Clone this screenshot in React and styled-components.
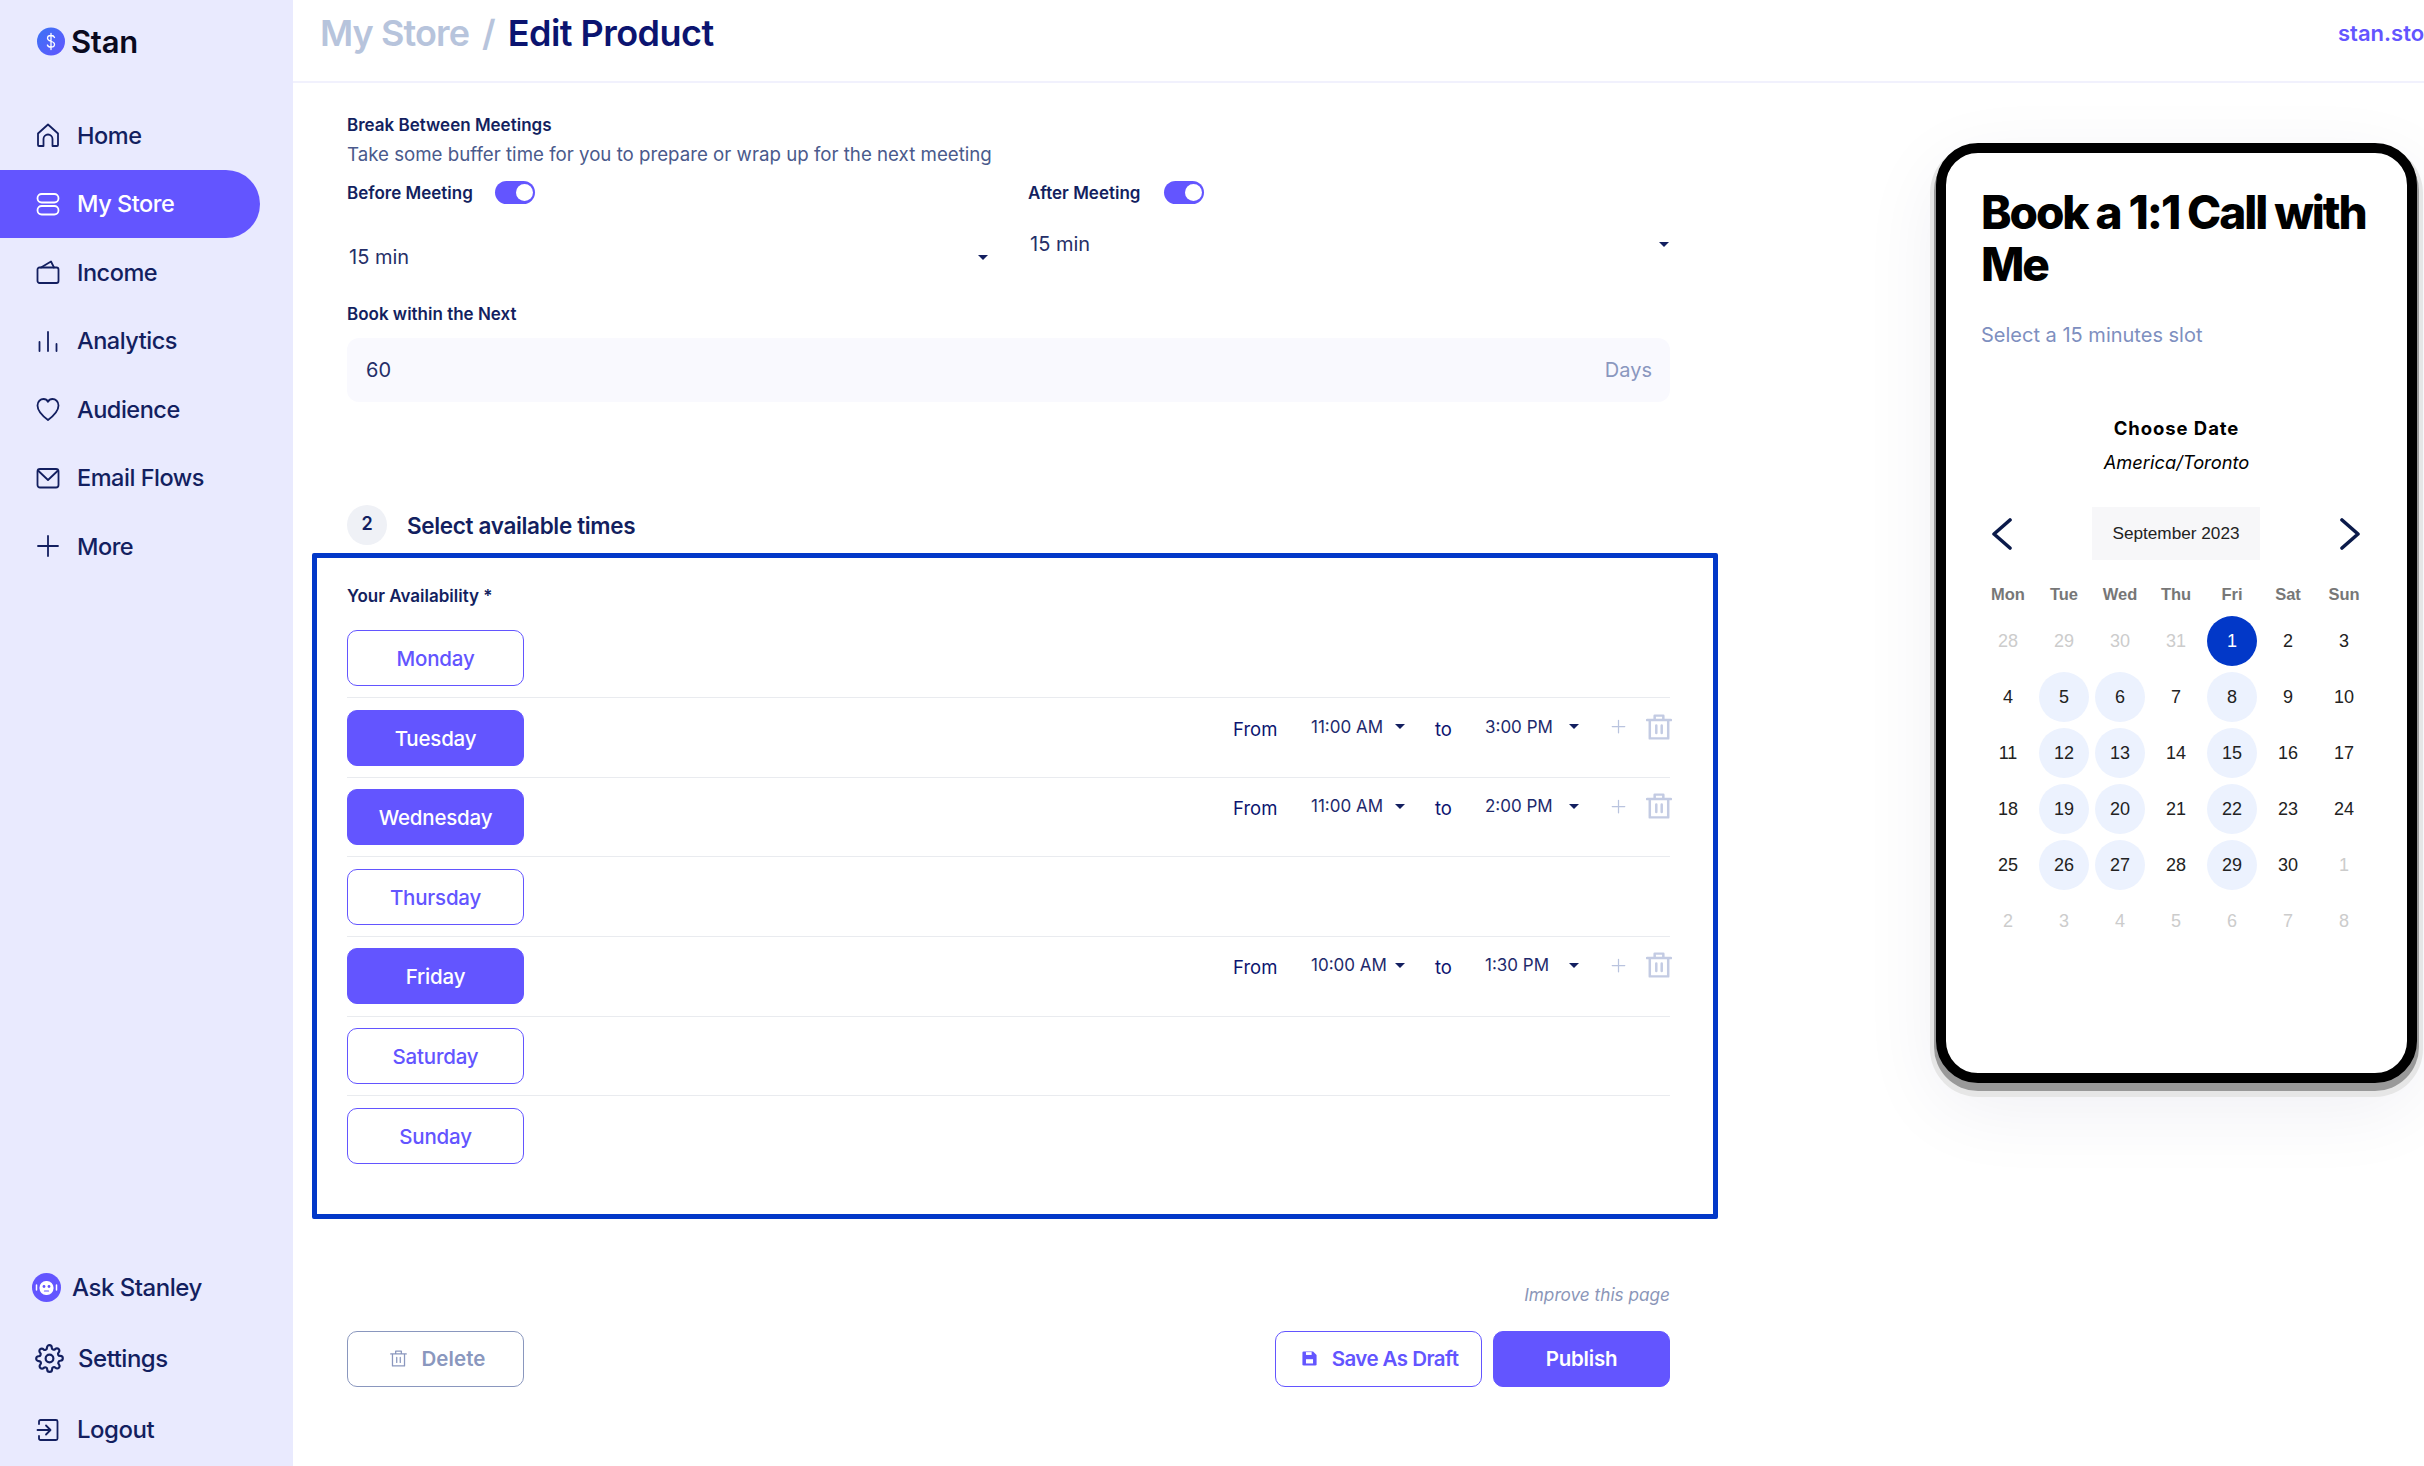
import styled, { createGlobalStyle } from 'styled-components'

const GlobalStyle = createGlobalStyle`
  * { box-sizing: border-box; }
  html, body { margin: 0; padding: 0; background: #fff; overflow: hidden; }
  body { font-family: Inter, "Noto Sans", sans-serif; color: #131f60; }
`

const purple = '#6355ff'
const navy = '#131f60'

const Page = styled.div`
  display: flex;
  width: 2424px;
  height: 1466px;
  overflow: hidden;
`

const Sidebar = styled.aside`
  flex: 0 0 293px;
  display: flex;
  flex-direction: column;
  justify-content: space-between;
  background: #e9eafe;
  padding-bottom: 1px;
`

const Logo = styled.div`
  display: flex;
  align-items: center;
  gap: 6px;
  height: 82px;
  margin-bottom: 19px;
  padding-left: 37px;
  font-size: 31px;
  font-weight: 600;
  letter-spacing: -0.01em;
  color: #0a0a1e;
`

const NavItem = styled.div`
  display: flex;
  align-items: center;
  gap: 17px;
  width: 260px;
  height: 68.5px;
  padding-left: 36px;
  font-size: 23.5px;
  font-weight: 500;
  letter-spacing: -0.02em;
  border-radius: 0 35px 35px 0;
  color: ${p => (p.$active ? '#fff' : navy)};
  background: ${p => (p.$active ? purple : 'transparent')};
`

const BottomItem = styled(NavItem)`
  height: 71px;
  padding-left: ${p => p.$left || 36}px;
  gap: ${p => p.$gap || 17}px;
  font-size: 24px;
`

const Main = styled.main`
  flex: 1;
  min-width: 0;
  display: flex;
  flex-direction: column;
`

const Header = styled.header`
  flex: 0 0 83px;
  display: flex;
  align-items: flex-start;
  padding: 12px 0 0 27px;
  border-bottom: 2px solid #f1f1fd;
  overflow: hidden;
`

const Crumbs = styled.div`
  flex: 0 0 2018px;
  display: flex;
  gap: 13px;
  font-size: 36px;
  line-height: 42px;
  font-weight: 600;
  letter-spacing: -0.025em;
`

const Crumb = styled.span`
  color: ${p => (p.$current ? '#0b1470' : '#b7c4dc')};
  letter-spacing: ${p => (p.$current ? '-0.015em' : 'inherit')};
`

const Domain = styled.span`
  flex: none;
  margin-top: 9px;
  font-size: 22px;
  line-height: 24px;
  font-weight: 600;
  color: ${purple};
  white-space: nowrap;
`

const Body = styled.div`
  flex: 1;
  display: flex;
`

const Form = styled.section`
  flex: 0 0 1323px;
  margin-left: 54px;
  padding-top: 30px;
`

const Label = styled.div`
  font-size: 17px;
  line-height: 24px;
  font-weight: 600;
  color: ${navy};
`

const Hint = styled.div`
  margin-top: 5px;
  font-size: 18.7px;
  line-height: 26px;
  color: #4a5a8c;
`

const TwoCols = styled.div`
  display: grid;
  grid-template-columns: 681px 642px;
  margin-top: 13px;
`

const ToggleRow = styled.div`
  display: flex;
  align-items: center;
  gap: ${p => p.$gap}px;
  height: 23px;
`

const Toggle = styled.div`
  display: flex;
  align-items: center;
  justify-content: flex-end;
  width: 40px;
  height: 23px;
  padding-right: 2px;
  border-radius: 12px;
  background: ${purple};

  &::after {
    content: '';
    width: 17px;
    height: 17px;
    border-radius: 50%;
    background: #fff;
  }
`

const Select = styled.div`
  display: flex;
  align-items: center;
  justify-content: space-between;
  height: 40px;
  margin-top: ${p => p.$top}px;
  padding-left: 2px;
  padding-right: ${p => p.$right}px;
  font-size: 20px;
  color: #252f68;
`

const Caret = styled.span`
  flex: none;
  width: 0;
  height: 0;
  border-left: ${p => p.$size}px solid transparent;
  border-right: ${p => p.$size}px solid transparent;
  border-top: ${p => p.$size}px solid #131f60;
`

const BookLabel = styled(Label)`
  margin-top: 25px;
`

const NumberInput = styled.div`
  display: flex;
  align-items: center;
  justify-content: space-between;
  height: 64px;
  margin-top: 12px;
  padding: 0 18px 0 19px;
  border-radius: 12px;
  background: #f9f9fe;
  font-size: 20px;
  color: #252f68;
`

const Unit = styled.span`
  color: #8a97be;
`

const StepRow = styled.div`
  display: flex;
  align-items: center;
  gap: 20px;
  margin-top: 103px;
`

const StepBadge = styled.div`
  display: flex;
  align-items: center;
  justify-content: center;
  width: 40px;
  height: 40px;
  padding-bottom: 4px;
  border-radius: 50%;
  background: #eff1f6;
  font-size: 18px;
  font-weight: 600;
`

const StepTitle = styled.div`
  font-size: 22.5px;
  font-weight: 600;
  letter-spacing: -0.015em;
  color: ${navy};
`

const AvailabilityBox = styled.div`
  margin: 8px -48px 0 -35px;
  padding: 26px 43px 38px 30px;
  border: 5.5px solid #0238c8;
  border-radius: 2px;
`

const DayList = styled.div`
  margin-top: 10.7px;
`

const DayRow = styled.div`
  display: flex;
  align-items: center;
  padding: 11.3px 0;
  border-bottom: 1px solid ${p => (p.$last ? 'transparent' : '#e9ebef')};
`

const DayButton = styled.div`
  flex: none;
  display: flex;
  align-items: center;
  justify-content: center;
  width: 177px;
  height: 56px;
  padding-top: 1px;
  border-radius: 10px;
  border: 1.5px solid ${purple};
  background: ${p => (p.$on ? purple : '#fff')};
  color: ${p => (p.$on ? '#fff' : purple)};
  font-size: 20.5px;
  font-weight: 500;
  letter-spacing: -0.01em;
`

const TimeGroup = styled.div`
  display: flex;
  align-items: center;
  margin-left: auto;
  margin-right: -2px;
  margin-bottom: 18px;
  color: #0b1470;
  font-size: 18.5px;
`

const FixedText = styled.span`
  width: ${p => p.$w}px;
`

const TimeSelect = styled.div`
  display: flex;
  align-items: center;
  justify-content: space-between;
  width: 124px;
  margin-bottom: 4px;
  padding-right: 30px;
  font-size: 17px;
  color: #1e2a6c;
`

const PlusSlot = styled.div`
  display: flex;
  width: 37px;
  margin-bottom: 4px;
  padding-left: 2px;
  color: #b9c3de;
`

const TrashSlot = styled.div`
  display: flex;
  margin-bottom: 4px;
  color: #c3cbe3;
`

const Improve = styled.div`
  margin-top: 64px;
  font-size: 17.2px;
  line-height: 24px;
  font-style: italic;
  text-align: right;
  color: #8b96b8;
`

const Actions = styled.div`
  display: flex;
  gap: 11px;
  margin-top: 24px;
`

const ActionButton = styled.div`
  display: flex;
  align-items: center;
  justify-content: center;
  gap: ${p => p.$gap || 0}px;
  width: ${p => p.$w}px;
  height: 56px;
  padding-left: ${p => p.$pad || 0}px;
  margin-right: ${p => (p.$push ? 'auto' : 0)};
  border-radius: 10px;
  border: 1.5px solid ${p => p.$line};
  background: ${p => p.$fill || '#fff'};
  color: ${p => p.$ink};
  font-size: 20.5px;
  font-weight: 600;
  letter-spacing: ${p => p.$track || '-0.01em'};
`

const PhoneWrap = styled.div`
  margin-left: 266px;
  padding-top: 60px;
`

const Phone = styled.div`
  width: 481px;
  height: 940px;
  padding: 33px 35px 0;
  border: 10px solid #000;
  border-radius: 42px;
  background: #fff;
  box-shadow:
    0 6px 0 2px #999,
    0 8px 0 6px #e6e6e6,
    0 24px 80px rgba(20, 20, 80, 0.07);
`

const PhoneTitle = styled.h1`
  margin: 0;
  font-size: 46px;
  line-height: 52px;
  font-weight: 800;
  letter-spacing: -0.045em;
  color: #000;
`

const PhoneSub = styled.div`
  margin-top: 32px;
  font-size: 20px;
  line-height: 26px;
  color: #7e8fbf;
`

const ChooseDate = styled.div`
  margin-top: 68px;
  font-size: 18.5px;
  line-height: 24px;
  font-weight: 700;
  letter-spacing: 0.05em;
  text-align: center;
  color: #000;
`

const Zone = styled.div`
  margin-top: 10px;
  font-size: 18.3px;
  line-height: 24px;
  font-style: italic;
  text-align: center;
  color: #000;
`

const Calendar = styled.div`
  width: 392px;
  margin: 33px 0 0 -1px;
  font-family: "Liberation Sans", Arial, sans-serif;
`

const MonthRow = styled.div`
  display: flex;
  align-items: center;
  justify-content: space-between;
  padding: 0 12px;
`

const MonthLabel = styled.div`
  display: flex;
  align-items: center;
  justify-content: center;
  width: 168px;
  height: 53px;
  background: #f7f7f9;
  font-size: 17.2px;
  color: #222;
`

const Grid = styled.div`
  display: grid;
  grid-template-columns: repeat(7, 56px);
  margin-top: ${p => p.$top}px;
`

const WeekDay = styled.div`
  line-height: 24px;
  font-size: 16.5px;
  font-weight: 700;
  text-align: center;
  color: #777;
`

const DateCell = styled.div`
  display: flex;
  align-items: center;
  justify-content: center;
  height: 56px;
`

const DateNum = styled.div`
  display: flex;
  align-items: center;
  justify-content: center;
  width: 50px;
  height: 50px;
  border-radius: 50%;
  font-size: 18px;
  background: ${p => (p.$kind === 'picked' ? '#0238c8' : p.$kind === 'open' ? '#ecf2fe' : 'transparent')};
  color: ${p => (p.$kind === 'picked' ? '#fff' : p.$kind === 'out' ? '#ccc' : '#222')};
`

function Icon({ children, size = 24, weight = 1.8 }) {
  return (
    <svg width={size} height={size} viewBox="0 0 24 24" fill="none" stroke="currentColor" strokeWidth={weight} strokeLinecap="round" strokeLinejoin="round">
      {children}
    </svg>
  )
}

const HomeIcon = () => (
  <Icon>
    <path d="M2 10.500 12 1.500l10 9V22a1 1 0 0 1-1 1h-4.500v-7a4.500 4.500 0 0 0-9 0v7H3a1 1 0 0 1-1-1z" />
  </Icon>
)
const StoreIcon = () => (
  <Icon>
    <rect x="1.500" y="2" width="21" height="8.500" rx="4.200" />
    <rect x="1.500" y="14" width="21" height="8.500" rx="4.200" />
  </Icon>
)
const IncomeIcon = () => (
  <Icon>
    <path d="M1.500 9.500a2 2 0 0 1 2-2h17a2 2 0 0 1 2 2V21a2 2 0 0 1-2 2h-17a2 2 0 0 1-2-2z" />
    <path d="M5 7.500 15 1.500l3 6" />
  </Icon>
)
const BarsIcon = () => (
  <Icon>
    <path d="M3.500 13v9M12 3v19M20.500 15v7" />
  </Icon>
)
const HeartIcon = () => (
  <Icon>
    <path d="M12 23C6 18.500 1.500 14 1.500 8.500 1.500 4.500 4.500 2 7.500 2c2 0 3.600 1 4.500 2.800C12.900 3 14.500 2 16.500 2c3 0 6 2.500 6 6.500C22.500 14 18 18.500 12 23z" />
  </Icon>
)
const MailIcon = () => (
  <Icon>
    <rect x="1.500" y="3" width="21" height="18.500" rx="2.500" />
    <path d="M2.500 5 12 14l9.500-9" />
  </Icon>
)
const PlusIcon = ({ size = 24, weight }) => (
  <Icon size={size} weight={weight}>
    <path d="M12 2v20M2 12h20" />
  </Icon>
)
const GearIcon = () => (
  <Icon size={29}>
    <circle cx="12" cy="12" r="3.200" />
    <path d="M19.400 15a1.650 1.650 0 0 0 .33 1.820l.06.06a2 2 0 1 1-2.830 2.830l-.06-.06a1.650 1.650 0 0 0-2.800 1.170V21a2 2 0 1 1-4 0v-.09a1.650 1.650 0 0 0-2.800-1.170l-.06.06a2 2 0 1 1-2.830-2.830l.06-.06a1.650 1.650 0 0 0-1.170-2.800H3a2 2 0 1 1 0-4h.09a1.650 1.650 0 0 0 1.170-2.800l-.06-.06a2 2 0 1 1 2.830-2.830l.06.06a1.650 1.650 0 0 0 2.800-1.170V3a2 2 0 1 1 4 0v.09a1.650 1.650 0 0 0 2.800 1.170l.06-.06a2 2 0 1 1 2.830 2.830l-.06.06a1.650 1.650 0 0 0 1.170 2.800H21a2 2 0 1 1 0 4h-.09a1.650 1.650 0 0 0-1.510 1.110z" />
  </Icon>
)
const LogoutIcon = () => (
  <Icon>
    <path d="M3 6V3.500A1.500 1.500 0 0 1 4.500 2H20a1.500 1.500 0 0 1 1.500 1.500v17A1.500 1.500 0 0 1 20 22H4.500A1.500 1.500 0 0 1 3 20.500V18" />
    <path d="M1.500 12H14M10 7.500l4.500 4.500L10 16.500" />
  </Icon>
)
const TrashIcon = ({ size = 26, weight = 2.300 }) => (
  <Icon size={size} weight={weight}>
    <path d="M1 5.500h22M8 5.500V1.500h8v4M3.500 5.500V22.500h17V5.500M9.500 10.500v7M14.500 10.500v7" />
  </Icon>
)
const SaveIcon = () => (
  <svg width="17" height="17" viewBox="0 0 24 24" fill="currentColor">
    <path d="M2 4a2 2 0 0 1 2-2h13l5 5v13a2 2 0 0 1-2 2H4a2 2 0 0 1-2-2z" />
    <rect x="7" y="13" width="10" height="6" fill="#fff" />
    <rect x="7" y="3" width="8" height="4" fill="#fff" />
  </svg>
)
const LogoMark = () => (
  <svg width="28" height="29" viewBox="0 0 28 29">
    <defs>
      <linearGradient id="logo" x1="0" y1="0" x2="1" y2="1">
        <stop offset="0" stopColor="#3a74f5" />
        <stop offset="1" stopColor="#6355ff" />
      </linearGradient>
    </defs>
    <circle cx="14" cy="14.500" r="14" fill="url(#logo)" />
    <path d="M17.500 10.500c-.5-1.500-2-2-3.500-2-2 0-3.500 1-3.500 2.800 0 3.700 7 2.200 7 6 0 1.800-1.500 2.900-3.500 2.900-1.700 0-3.100-.7-3.600-2.200M14 6.500v16" fill="none" stroke="#fff" strokeWidth="1.300" strokeLinecap="round" />
  </svg>
)
const StanleyMark = () => (
  <svg width="29" height="29" viewBox="0 0 29 29">
    <circle cx="14.500" cy="14.500" r="14.500" fill={purple} />
    <rect x="7.500" y="8" width="14" height="14" rx="6.500" fill="#fff" />
    <circle cx="12" cy="13.500" r="1.400" fill={purple} />
    <circle cx="17" cy="13.500" r="1.400" fill={purple} />
    <path d="M12.500 18h4" stroke={purple} strokeWidth="1.200" strokeLinecap="round" />
    <path d="M4.500 12v5M24.500 12v5" stroke="#fff" strokeWidth="1.500" strokeLinecap="round" />
  </svg>
)
const Chevron = ({ flip }) => (
  <svg width="20" height="32" viewBox="0 0 20 32" fill="none" stroke="#0b1a4a" strokeWidth="3.600" strokeLinecap="round" strokeLinejoin="round">
    <path d={flip ? 'M2 2l16 14L2 30' : 'M18 2 2 16l16 14'} />
  </svg>
)

const navItems = [
  ['Home', <HomeIcon />],
  ['My Store', <StoreIcon />, true],
  ['Income', <IncomeIcon />],
  ['Analytics', <BarsIcon />],
  ['Audience', <HeartIcon />],
  ['Email Flows', <MailIcon />],
  ['More', <PlusIcon />],
]

const days = [
  { name: 'Monday' },
  { name: 'Tuesday', from: '11:00 AM', to: '3:00 PM' },
  { name: 'Wednesday', from: '11:00 AM', to: '2:00 PM' },
  { name: 'Thursday' },
  { name: 'Friday', from: '10:00 AM', to: '1:30 PM' },
  { name: 'Saturday' },
  { name: 'Sunday' },
]

const weekDays = ['Mon', 'Tue', 'Wed', 'Thu', 'Fri', 'Sat', 'Sun']
const openDates = [5, 6, 8, 12, 13, 15, 19, 20, 22, 26, 27, 29]

const calendar = [
  ...[28, 29, 30, 31].map(n => ({ n, kind: 'out' })),
  ...Array.from({ length: 30 }, (_, i) => {
    const n = i + 1
    return { n, kind: n === 1 ? 'picked' : openDates.includes(n) ? 'open' : 'day' }
  }),
  ...[1, 2, 3, 4, 5, 6, 7, 8].map(n => ({ n, kind: 'out' })),
]

export default function App() {
  return (
    <Page>
      <GlobalStyle />
      <Sidebar>
        <div>
          <Logo><LogoMark />Stan</Logo>
          {navItems.map(([label, icon, active]) => (
            <NavItem key={label} $active={active}>{icon}{label}</NavItem>
          ))}
        </div>
        <div>
          <BottomItem $left={32} $gap={11}><StanleyMark />Ask Stanley</BottomItem>
          <BottomItem $left={35} $gap={14}><GearIcon />Settings</BottomItem>
          <BottomItem><LogoutIcon />Logout</BottomItem>
        </div>
      </Sidebar>

      <Main>
        <Header>
          <Crumbs>
            <Crumb>My Store</Crumb>
            <Crumb>/</Crumb>
            <Crumb $current>Edit Product</Crumb>
          </Crumbs>
          <Domain>stan.store</Domain>
        </Header>

        <Body>
          <Form>
            <Label>Break Between Meetings</Label>
            <Hint>Take some buffer time for you to prepare or wrap up for the next meeting</Hint>
            <TwoCols>
              <div>
                <ToggleRow $gap={22}><Label>Before Meeting</Label><Toggle /></ToggleRow>
                <Select $top={33} $right={40}>15 min<Caret $size={5} /></Select>
              </div>
              <div>
                <ToggleRow $gap={24}><Label>After Meeting</Label><Toggle /></ToggleRow>
                <Select $top={20} $right={1}>15 min<Caret $size={5} /></Select>
              </div>
            </TwoCols>

            <BookLabel>Book within the Next</BookLabel>
            <NumberInput>60<Unit>Days</Unit></NumberInput>

            <StepRow>
              <StepBadge>2</StepBadge>
              <StepTitle>Select available times</StepTitle>
            </StepRow>

            <AvailabilityBox>
              <Label>Your Availability *</Label>
              <DayList>
                {days.map((d, i) => (
                  <DayRow key={d.name} $last={i === days.length - 1}>
                    <DayButton $on={!!d.from}>{d.name}</DayButton>
                    {d.from && (
                      <TimeGroup>
                        <FixedText $w={78}>From</FixedText>
                        <TimeSelect>{d.from}<Caret $size={5} /></TimeSelect>
                        <FixedText $w={50}>to</FixedText>
                        <TimeSelect>{d.to}<Caret $size={5} /></TimeSelect>
                        <PlusSlot><PlusIcon size={15} weight={2} /></PlusSlot>
                        <TrashSlot><TrashIcon /></TrashSlot>
                      </TimeGroup>
                    )}
                  </DayRow>
                ))}
              </DayList>
            </AvailabilityBox>

            <Improve>Improve this page</Improve>
            <Actions>
              <ActionButton $push $w={177} $gap={14} $pad={5} $line="#8a97be" $ink="#8a97be" $track="0.005em">
                <TrashIcon size={17} weight={1.800} />Delete
              </ActionButton>
              <ActionButton $w={207} $gap={14} $pad={2} $line={purple} $ink={purple} $track="-0.027em">
                <SaveIcon />Save As Draft
              </ActionButton>
              <ActionButton $w={177} $line={purple} $fill={purple} $ink="#fff">Publish</ActionButton>
            </Actions>
          </Form>

          <PhoneWrap>
            <Phone>
              <PhoneTitle>Book a 1:1 Call with Me</PhoneTitle>
              <PhoneSub>Select a 15 minutes slot</PhoneSub>
              <ChooseDate>Choose Date</ChooseDate>
              <Zone>America/Toronto</Zone>
              <Calendar>
                <MonthRow>
                  <Chevron />
                  <MonthLabel>September 2023</MonthLabel>
                  <Chevron flip />
                </MonthRow>
                <Grid $top={22}>
                  {weekDays.map(d => <WeekDay key={d}>{d}</WeekDay>)}
                </Grid>
                <Grid $top={7}>
                  {calendar.map((c, i) => (
                    <DateCell key={i}><DateNum $kind={c.kind}>{c.n}</DateNum></DateCell>
                  ))}
                </Grid>
              </Calendar>
            </Phone>
          </PhoneWrap>
        </Body>
      </Main>
    </Page>
  )
}
